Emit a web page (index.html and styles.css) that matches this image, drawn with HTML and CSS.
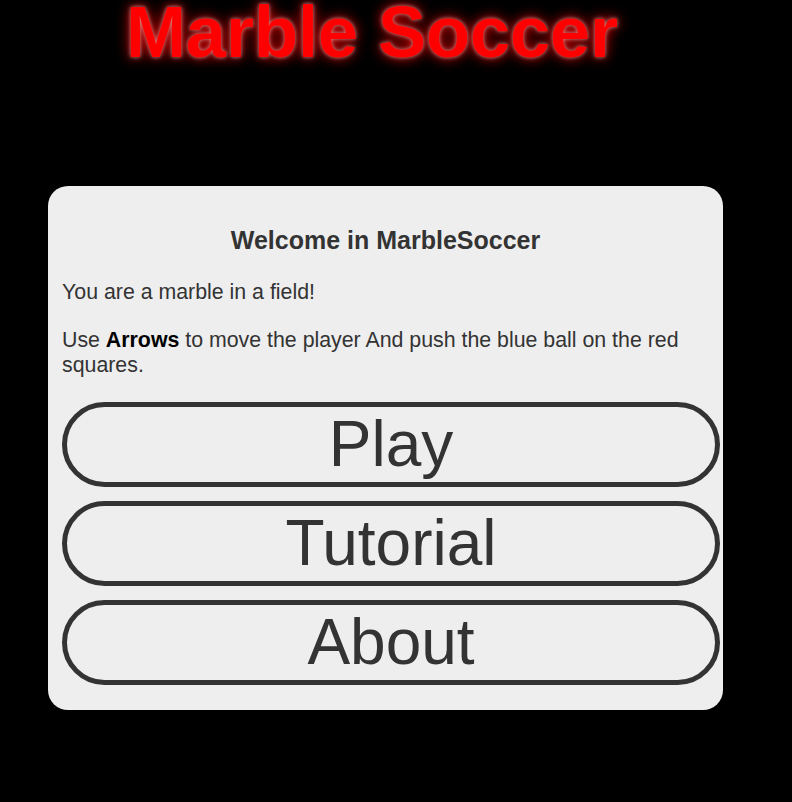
FILE: index.html
```html
<!DOCTYPE html>
<html lang="en">
<head>
    <meta charset="UTF-8">
    <meta name="viewport" content="width=device-width, initial-scale=1.0">
    <title>Marble Soccer</title>
    <link rel="stylesheet" href="styles.css">
</head>
<body>
    <h1 class="game-title">Marble Soccer</h1>

    <div class="menu-card">
        <h3 class="menu-heading">Welcome in MarbleSoccer</h3>
        <p class="menu-text">You are a marble in a field!</p>
        <p class="menu-text">Use <b>Arrows</b> to move the player And push the blue ball on the red squares.</p>

        <div class="menu-buttons">
            <button class="menu-btn">Play</button>
            <button class="menu-btn">Tutorial</button>
            <button class="menu-btn">About</button>
        </div>
    </div>
</body>
</html>
```

FILE: styles.css
```css
* {
    box-sizing: border-box;
}

body {
    margin: 0;
    min-height: 100vh;
    background-color: #000;
    font-family: "Liberation Sans", Arial, sans-serif;
}

.game-title {
    margin: 0;
    padding: 2px 48px 0 0;
    text-align: center;
    font-size: 72px;
    line-height: 60px;
    font-weight: bold;
    color: #f00;
    text-shadow: 0 0 4px rgba(255, 200, 200, 0.7), 0 0 14px #f00;
}

.menu-card {
    width: 675px;
    margin: 124px 0 0 48px;
    padding: 14px 14px 25px;
    background-color: #eee;
    border-radius: 20px;
    color: #333;
    font-size: 21.33px;
}

.menu-heading {
    margin: 26px 0 25px;
    text-align: center;
    font-size: 25px;
    line-height: 29px;
}

.menu-text {
    margin: 23px 0;
    line-height: 25px;
}

.menu-text b {
    color: #000;
}

.menu-buttons {
    display: flex;
    flex-direction: column;
    gap: 14px;
    margin-top: 24px;
}

.menu-btn {
    width: calc(100% + 11px);
    height: 85px;
    padding: 1px 6px;
    background-color: transparent;
    border: 5px solid #333;
    border-radius: 999px;
    font-family: "Liberation Sans", Arial, sans-serif;
    font-size: 64px;
    line-height: 73px;
    color: #333;
    cursor: pointer;
}
```
